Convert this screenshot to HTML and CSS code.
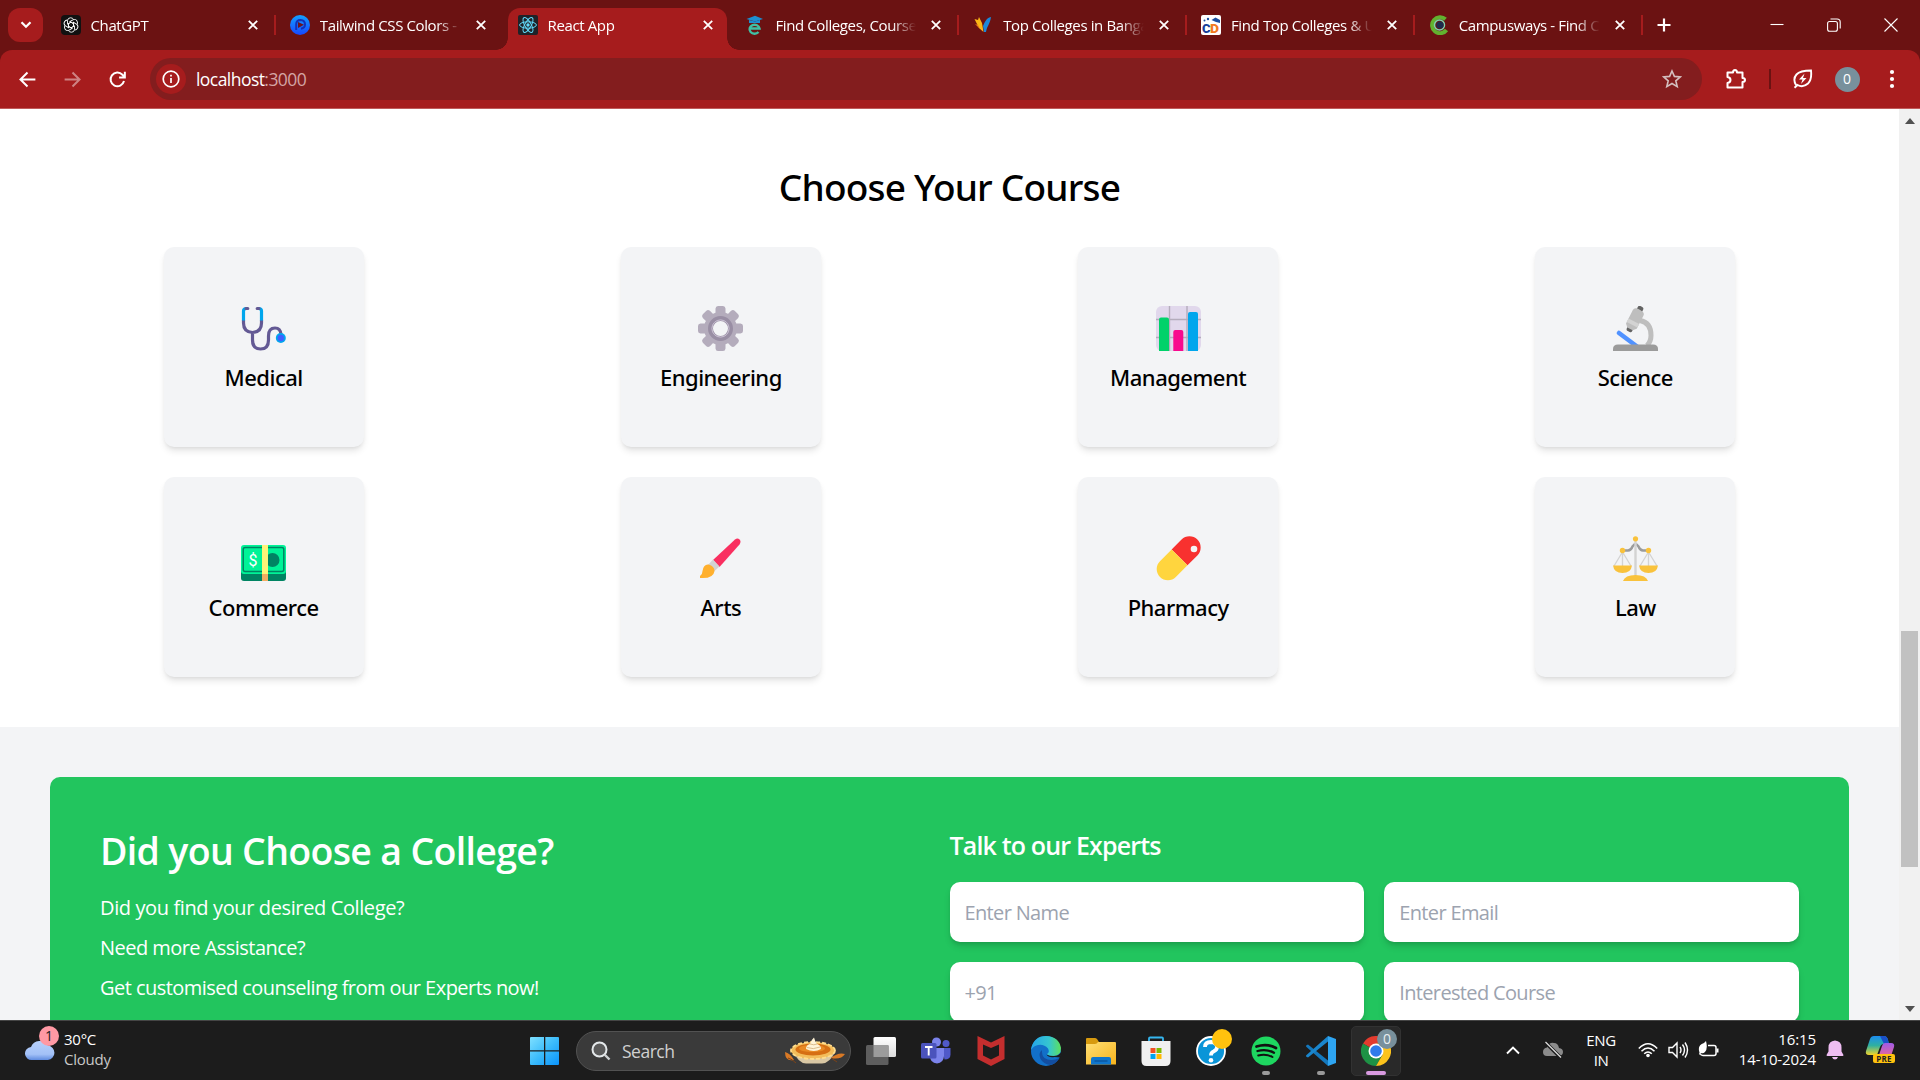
FILE: index.html
```html
<!DOCTYPE html>
<html lang="en">
<head>
<meta charset="utf-8">
<title>React App</title>
<link rel="stylesheet" href="styles.css">
</head>
<body>
<header class="tabstrip">
  <button class="tab-search" aria-label="Search tabs"><svg width="12" height="8" viewBox="0 0 12 8"><path d="M1.5 1.2 6 5.8l4.5-4.6" fill="none" stroke="#fff" stroke-width="2.2"/></svg></button>
  <div class="tab sep first"><svg class="fav" viewBox="0 0 20 20"><rect width="20" height="20" rx="4" fill="#111"/><g fill="none" stroke="#fff" stroke-width=".9"><path id="k" d="M10 7.200 6.500 9.200V5.300Q7 2.800 9.500 2.800q2 0 3 1.500"/><use href="#k" transform="rotate(60 10 10)"/><use href="#k" transform="rotate(120 10 10)"/><use href="#k" transform="rotate(180 10 10)"/><use href="#k" transform="rotate(240 10 10)"/><use href="#k" transform="rotate(300 10 10)"/><path d="m10 7.200 2.500 1.400v2.800L10 12.800l-2.500-1.400V8.600z"/></g></svg><span class="title">ChatGPT</span><svg class="close" viewBox="0 0 10 10"><path d="M.8.8l8.4 8.4M9.200.8.8 9.200"/></svg></div>
  <div class="tab"><svg class="fav" viewBox="0 0 20 20"><defs><linearGradient id="tw" x2="0" y2="1"><stop stop-color="#12a0ff"/><stop offset="1" stop-color="#1746ff"/></linearGradient></defs><circle cx="10" cy="10" r="10" fill="url(#tw)"/><path d="M6.200 15V9.500Q6.200 5 10.500 5q4.500.3 4.500 4.500 0 3.500-4 4.200" fill="none" stroke="#1330b8" stroke-width="2"/><path d="M8 7 14 9.800 8 13z" fill="#6b1420"/></svg><span class="title">Tailwind CSS Colors - Tailwind</span><svg class="close" viewBox="0 0 10 10"><path d="M.8.8l8.4 8.4M9.200.8.8 9.200"/></svg></div>
  <div class="tab active"><svg class="fav" viewBox="0 0 20 20"><rect width="20" height="20" rx="2" fill="#202228"/><g fill="none" stroke="#61dafb" stroke-width="1"><ellipse cx="10" cy="10" rx="8.400" ry="3.200"/><ellipse cx="10" cy="10" rx="8.400" ry="3.200" transform="rotate(60 10 10)"/><ellipse cx="10" cy="10" rx="8.400" ry="3.200" transform="rotate(120 10 10)"/></g><circle cx="10" cy="10" r="1.700" fill="#61dafb"/></svg><span class="title">React App</span><svg class="close" viewBox="0 0 10 10"><path d="M.8.8l8.4 8.4M9.200.8.8 9.200"/></svg></div>
  <div class="tab sep"><svg class="fav" viewBox="0 0 20 20"><path d="M1.500 4 10 .8 18 4l-8 2.500z" fill="#1d8fd1"/><path d="M4 5v3h11V5l-5 1.500z" fill="#1d8fd1"/><path d="M5 13.500h9.500A5 4.500 0 1 0 13.500 17" fill="none" stroke="#3fc0a5" stroke-width="2.400"/></svg><span class="title">Find Colleges, Courses, Exams</span><svg class="close" viewBox="0 0 10 10"><path d="M.8.8l8.4 8.4M9.200.8.8 9.200"/></svg></div>
  <div class="tab sep"><svg class="fav" viewBox="0 0 20 20"><path d="M1.500 4 5 5 6 2l3 6 1.500 9L6 13z" fill="#fbb615"/><path d="M2 9l3 1 2 4z" fill="#ef7d1a"/><path d="M18 2c-5 1-6 5-8 9l1 6h2c1-6 4-8 5-15z" fill="#1b87d8"/></svg><span class="title">Top Colleges in Bangalore</span><svg class="close" viewBox="0 0 10 10"><path d="M.8.8l8.4 8.4M9.200.8.8 9.200"/></svg></div>
  <div class="tab sep"><svg class="fav" viewBox="0 0 20 20"><rect width="20" height="20" rx="2" fill="#fff"/><path d="m10.500 5 4-2.500L19 5v3l-4-1z" fill="#1c4fa0"/><circle cx="3.500" cy="5.500" r="1" fill="#1c4fa0"/><circle cx="7" cy="4" r="1.200" fill="#1c4fa0"/><g font-family="Roboto,sans-serif" font-weight="900" font-size="13.500"><text x="1" y="17.500" textLength="8.500" lengthAdjust="spacingAndGlyphs" fill="#17409a">C</text><text x="9" y="17.500" textLength="9" lengthAdjust="spacingAndGlyphs" fill="#f27a1f">D</text></g></svg><span class="title">Find Top Colleges &amp; Universities</span><svg class="close" viewBox="0 0 10 10"><path d="M.8.8l8.4 8.4M9.200.8.8 9.200"/></svg></div>
  <div class="tab sep"><svg class="fav" viewBox="0 0 20 20"><path d="M16.500 4.300A8 8 0 1 0 17.500 15" fill="none" stroke="#62b22f" stroke-width="4"/><circle cx="10.500" cy="10" r="5" fill="none" stroke="#7fd3b0" stroke-width="1.500"/><circle cx="11" cy="10" r="3.600" fill="#1d2c4d"/></svg><span class="title">Campusways - Find Colleges</span><svg class="close" viewBox="0 0 10 10"><path d="M.8.8l8.4 8.4M9.200.8.8 9.200"/></svg></div>
  <svg class="newtab" width="14" height="14" viewBox="0 0 14 14"><path d="M7 .5v13M.5 7h13" stroke="#fff" stroke-width="2.200"/></svg>
  <div class="winctl">
    <svg width="14" height="14" viewBox="0 0 14 14"><path d="M.5 6.500h13"/></svg>
    <svg width="14" height="14" viewBox="0 0 14 14"><rect x=".6" y="3.500" width="9.800" height="9.800" rx="2"/><path d="M3.500 1h6.500q3.200 0 3.200 3v6.500"/></svg>
    <svg width="14" height="14" viewBox="0 0 14 14"><path d="m.5.5 13 13M13.500.5.5 13.500"/></svg>
  </div>
</header>
<div class="toolbar-back">
<nav class="toolbar">
  <svg class="nav" viewBox="0 0 20 20"><path d="M17.500 10H3.500M10 3.300 3.300 10l6.700 6.700" /></svg>
  <svg class="nav dim" viewBox="0 0 20 20"><path d="M2.500 10h14M10 3.300l6.700 6.700-6.700 6.700"/></svg>
  <svg class="nav" viewBox="0 0 20 20"><path d="M16.200 11.500A6.500 6.500 0 1 1 14.700 5.500L16.500 7.500M17 2.500V8h-5.500"/></svg>
  <div class="omnibox">
    <span class="info"><svg width="18" height="18" viewBox="0 0 18 18"><circle cx="9" cy="9" r="7.800" fill="none" stroke="#fff" stroke-width="1.700"/><path d="M9 8v5M9 4.800v1.700" stroke="#fff" stroke-width="1.700"/></svg></span>
    <span class="url">localhost<i>:3000</i></span>
    <svg class="star" width="20" height="20" viewBox="0 0 20 20"><path d="m10 2 2.400 5.400 5.900.5-4.500 3.900 1.400 5.800L10 14.500l-5.200 3.100 1.400-5.800L1.700 7.900l5.900-.5z" fill="none" stroke="#d4bfbf" stroke-width="1.600"/></svg>
  </div>
  <div class="tools">
    <svg width="22" height="22" viewBox="0 0 22 22"><path d="M2.500 4.500H8Q8 2 10 2t2 2.500h5.500V10q2.500 0 2.500 2t-2.500 2v5.500h-15V15q3-.5 3-3t-3-3z" fill="none" stroke="#fff" stroke-width="2" stroke-linejoin="round"/></svg>
    <span class="bar"></span>
    <svg width="22" height="22" viewBox="0 0 22 22"><path d="M4 17Q.5 11 4.500 6.500 8 2.500 19 2.500q1 9-3 13Q11 20 5.500 17L2.500 19.800" fill="none" stroke="#fff" stroke-width="1.900"/><path d="m12.500 5.500-5.500 6h3.500L9 16l5.500-6H11z" fill="#fff"/></svg>
    <span class="avatar">0</span>
    <svg class="dots" width="6" height="20" viewBox="0 0 6 20"><circle cx="3" cy="3" r="2.100"/><circle cx="3" cy="10" r="2.100"/><circle cx="3" cy="17" r="2.100"/></svg>
  </div>
</nav>
</div>
<div class="viewport">
<main class="page">
  <section class="courses">
    <h1>Choose Your Course</h1>
    <div class="grid">
      <div class="card"><svg viewBox="0 0 45 45"><g fill="none" stroke-width="3.200"><path d="M2.500 14v3q0 9 9 9.500 9-.5 9-9.500v-3M11.500 26v8q0 9 8 9t8-9V30q0-8 6.500-8 5.500 0 6 6.500" stroke="#635994"/><path d="M2.500 14.500V5q0-2.500 3-2.500M20.500 14.500V5q0-2.500-3-2.500" stroke="#00a6ed"/><path d="M5 2.500h1.800M16.200 2.500H18" stroke="#635994" stroke-linecap="round"/></g><circle cx="39.800" cy="32" r="5" fill="#00a6ed"/><circle cx="39.800" cy="32" r="3.200" fill="#3f5fff"/></svg><h2>Medical</h2></div>
      <div class="card"><svg viewBox="0 0 45 45"><g fill="#b4acbc"><circle cx="22.500" cy="22.500" r="16.500"/><g id="t"><path d="M17.500 8V2.500Q17.700 0 20 0h5q2.300 0 2.500 2.500V8zM17.500 37v5.500q.2 2.500 2.500 2.500h5q2.300 0 2.500-2.500V37z"/></g><use href="#t" transform="rotate(45 22.500 22.500)"/><use href="#t" transform="rotate(90 22.500 22.500)"/><use href="#t" transform="rotate(135 22.500 22.500)"/></g><circle cx="22.500" cy="22.500" r="10" fill="#f3f4f6" stroke="#998ea4" stroke-width="5"/><circle cx="22.500" cy="22.500" r="8.600" fill="none" stroke="#cdc4d6"/></svg><h2>Engineering</h2></div>
      <div class="card"><svg viewBox="0 0 45 45"><rect width="45" height="45" rx="6" fill="#e1d8ec"/><path d="M13.500 0v45M31 0v45M0 13.500h45M0 31.500h45" stroke="#b4acbc" stroke-width="1.400"/><path d="M3 45V13.500q0-2 2-2h6q2 0 2 2V45z" fill="#00d26a"/><path d="M17.300 45V26q0-2 2-2h6q2 0 2 2v19z" fill="#f8098e"/><path d="M32 45V8q0-2 2-2h6q2 0 2 2v37z" fill="#00a6ed"/></svg><h2>Management</h2></div>
      <div class="card"><svg viewBox="0 0 45 45"><path d="M27 14.500q11 2 11 15 0 6-4 10" fill="none" stroke="#bebebe" stroke-width="5"/><path d="m6 27 20 15" stroke="#5092ff" stroke-width="4.500" stroke-linecap="round"/><g transform="rotate(27 22 13)"><rect x="19" y="-1" width="6" height="28" rx="2" fill="#636363"/><path d="M16 6q0-3.500 6-3.500t6 3.500v15l-3 3h-6l-3-3z" fill="#bebebe"/><path d="M16 15.500h12v4H16z" fill="#d3d3d3"/></g><path d="M0 45v-2q0-4.500 5-4.500h35q5 0 5 4.500v2z" fill="#9b9b9b"/></svg><h2>Science</h2></div>
      <div class="card"><svg viewBox="0 0 45 45"><rect y="14" width="45" height="31" rx="3" fill="#008463"/><rect y="9" width="45" height="29" rx="3" fill="#00f397"/><rect x="2.200" y="11.500" width="40.600" height="24" rx="2" fill="none" stroke="#008463" stroke-width="1.500"/><circle cx="31.500" cy="24" r="7" fill="#008463"/><path d="M21 9h6v29h-6z" fill="#fff478"/><path d="M21 38h6v7h-6z" fill="#f3ad61"/><text x="12" y="30" text-anchor="middle" font-family="Roboto,sans-serif" font-size="16" fill="#fff">$</text></svg><h2>Commerce</h2></div>
      <div class="card"><svg viewBox="0 0 45 45"><path d="m15 24 22-20.500q2.500-2 4.500 0t0 5L21.500 31z" fill="#f92f60"/><path d="m10 29 5-5.500 6.500 7-5.500 5z" fill="#d3d3d3"/><path d="M2 40q2.500-1.500 2.500-5 1-7 6-6.500 6 1.500 6 6.500-1 8-14.500 7z" fill="#ffb02e"/></svg><h2>Arts</h2></div>
      <div class="card"><svg viewBox="0 0 45 45"><g transform="rotate(45 22.500 22.500)"><path d="M11.300 22.500V8.500a11.200 11.200 0 0 1 22.400 0v14z" transform="translate(0 -1.500)" fill="#f8312f"/><path d="M11.300 21v16.500a11.200 11.200 0 0 0 22.400 0V21z" fill="#ffd53e"/></g><circle cx="38" cy="13" r="3.300" fill="#f4f4f4"/></svg><h2>Pharmacy</h2></div>
      <div class="card"><svg viewBox="0 0 45 45"><path d="M10 14.500h5q3 0 4.500-4l2-2h2l2 2q1.500 4 4.500 4h5" fill="none" stroke="#9b9b9b" stroke-width="2.400"/><path d="M22.500 5v35" stroke="#d3d3d3" stroke-width="2.400"/><path d="M9.500 16 1 30M9.500 16 18 30M9.500 16v14M35.500 16 27 30M35.500 16 44 30M35.500 16v14" stroke="#d3d3d3" stroke-width="1.300"/><g fill="#f9c23c"><circle cx="22.500" cy="2.800" r="2.600"/><circle cx="9.500" cy="14.500" r="2.700"/><circle cx="35.500" cy="14.500" r="2.700"/><path d="M0 29.500h19q-1 7.500-9.500 7.500T0 29.500zM26 29.500h19q-1 7.500-9.500 7.500T26 29.500zM10 45q2-6 12.500-6T35 45z"/></g></svg><h2>Law</h2></div>
    </div>
  </section>
  <section class="contact">
    <div class="panel">
      <div class="pitch">
        <h3>Did you Choose a College?</h3>
        <p class="lead">Did you find your desired College?</p>
        <p>Need more Assistance?</p>
        <p>Get customised counseling from our Experts now!</p>
      </div>
      <form class="form">
        <h4>Talk to our Experts</h4>
        <div class="fields">
          <input placeholder="Enter Name"><input placeholder="Enter Email"><input placeholder="+91"><input placeholder="Interested Course">
        </div>
      </form>
    </div>
  </section>
</main>
<aside class="scroll">
  <svg width="10" height="6" viewBox="0 0 10 6"><path d="M0 6 5 0l5 6z" fill="#505050"/></svg>
  <div class="track"><div class="thumb"></div></div>
  <svg width="10" height="6" viewBox="0 0 10 6"><path d="M0 0h10L5 6z" fill="#505050"/></svg>
</aside>
</div>
<footer class="taskbar">
  <div class="weather">
    <span class="wicon"><svg width="30" height="24" viewBox="0 0 30 24"><defs><linearGradient id="cl" x2="0" y2="1"><stop stop-color="#b7d0fb"/><stop offset=".7" stop-color="#a3c1f7"/><stop offset="1" stop-color="#5f8be0"/></linearGradient></defs><path d="M7 23a6.500 6.500 0 0 1-1-13A9.500 9.500 0 0 1 23 8.500 7.300 7.300 0 0 1 23 23z" fill="url(#cl)"/></svg><b>1</b></span>
    <span class="wtext">30°C<br><em>Cloudy</em></span>
  </div>
  <div class="apps">
    <span class="app start"><svg width="30" height="30" viewBox="0 0 30 30"><defs><linearGradient id="w" x2="1" y2="1"><stop stop-color="#7fe0ff"/><stop offset=".5" stop-color="#3cbcfb"/><stop offset="1" stop-color="#0a93fb"/></linearGradient></defs><path d="M0 2q0-1 1-1h13v13.300H0zM15.300 1H28q1 0 1 1v12.300H15.300zM0 15.600h14V29H1q-1 0-1-1zM15.300 15.600H29V28q0 1-1 1H15.300z" fill="url(#w)"/></svg></span>
    <div class="search"><svg width="20" height="20" viewBox="0 0 20 20"><circle cx="8.500" cy="8.500" r="7" fill="#5a5a5a" stroke="#e4e8ea" stroke-width="2"/><path d="m13.500 13.500 5 5" stroke="#cfd2d4" stroke-width="2.400"/></svg><span>Search</span>
      <svg class="pie" width="60" height="28" viewBox="0 0 60 28"><path d="M9 15q4 11 12 11.500h16Q45 26 50 15z" fill="#d9c7a4"/><ellipse cx="28" cy="13.500" rx="22" ry="8.500" fill="#f3bd5b"/><ellipse cx="28" cy="13.500" rx="22" ry="8.500" fill="none" stroke="#ffdc8c" stroke-width="1.800" stroke-dasharray="4 2"/><ellipse cx="28" cy="12.500" rx="17.500" ry="6" fill="#d66f13"/><ellipse cx="27" cy="11.500" rx="13" ry="3.500" fill="#e98a24"/><path d="M21 12q0-4 4-5 1-4 4-6.500 1 4 3 6.500 4 1 4 5-7 4-15 0z" fill="#fff3d6"/><path d="M22 10.500q6 2.500 13-.5M25 7q4 1.500 7 0" stroke="#dbbd8d" fill="none"/><path d="M0 15q5 1 9 8-9 2-9-8zM46 21q7-6 14-4-4 6-14 4z" fill="#d97925"/><path d="M3 21q4 1 8 5M46 21l6 4" stroke="#7d4217" fill="none"/></svg></div>
    <span class="app"><svg width="30" height="30" viewBox="0 0 30 30"><defs><linearGradient id="tv" x2="0" y2="1"><stop stop-color="#fff"/><stop offset="1" stop-color="#dcdcdc"/></linearGradient></defs><rect x="7.500" y="1" width="22.500" height="20" rx="1.500" fill="url(#tv)"/><rect y="9" width="22.500" height="20" rx="1.500" fill="#5e5e5e"/><path d="M7.500 9h15v12h-15z" fill="#9c9c9c"/></svg></span>
    <span class="app"><svg width="30" height="30" viewBox="0 0 30 30"><circle cx="25" cy="7.500" r="3.500" fill="#5059c9"/><path d="M21 12h8.500v6.500q0 5-6 5z" fill="#5059c9"/><circle cx="15.500" cy="6" r="4.500" fill="#7b83eb"/><path d="M9 12h14v8q-.5 7-7 7.500-7-.5-7-7.500z" fill="#7b83eb"/><rect y="7" width="15.500" height="15.500" rx="1.500" fill="#4b53bc"/><path d="M4 11h7.500M7.700 11v8.500" stroke="#fff" stroke-width="1.900"/></svg></span>
    <span class="app"><svg width="30" height="30" viewBox="0 0 30 30"><path d="m1.500 0 13.500 6.500L28.500 0v23L15 30 1.500 23zM7 8.500v11l8 4 8-4v-11L15 12z" fill="#c42e2e" fill-rule="evenodd"/></svg></span>
    <span class="app"><svg width="30" height="30" viewBox="0 0 30 30"><defs><linearGradient id="e1"><stop stop-color="#25a5ea"/><stop offset=".6" stop-color="#35c6d0"/><stop offset="1" stop-color="#5de05c"/></linearGradient></defs><circle cx="15" cy="15" r="15" fill="#1270c9"/><path d="M.2 12.500Q3 0 15 0q13 .5 15 12 0 8-8 8-5 0-6-2 3-2 1-5.500Q13 8 7 9q-5 1-6.800 5z" fill="url(#e1)"/><path d="M11 14q-4 3-1.500 9 3 5 9.500 6 6-1 9.500-7-9 4-15 0-3-3-2.500-8z" fill="#134ea0"/><path d="M15.500 18.500q2 3.500 8 2.500l6 .5L31 13q-1 7-8 7-5 0-7.500-1.500z" fill="#1c1c1c"/></svg></span>
    <span class="app"><svg width="30" height="30" viewBox="0 0 30 30"><defs><linearGradient id="fd" x2="1" y2="1"><stop stop-color="#ffdf75"/><stop offset="1" stop-color="#f8b41c"/></linearGradient></defs><path d="M0 3q0-1 1-1h8q1 0 2 1l2 3v5H0z" fill="#d79a0f"/><path d="M0 8h9q2 0 3-2h17q1 0 1 1v21.500H0z" fill="url(#fd)"/><path d="M5 28.500V23q0-2 2-2h16q2 0 2 2v5.500z" fill="#1076cc"/><path d="M8.500 25h13" stroke="#0b549b" stroke-width="1.300"/></svg></span>
    <span class="app"><svg width="30" height="30" viewBox="0 0 30 30"><path d="M8 7V2.500Q8 1.500 9 1.500h12q1 0 1 1V7" fill="none" stroke="#35b6ef" stroke-width="1.800"/><path d="M.5 5h29v20q0 5-5 5h-19q-5 0-5-5z" fill="#f0f0f0"/><path d="M9.500 12h5v5h-5z" fill="#f25022"/><path d="M15.500 12h5v5h-5z" fill="#7fba00"/><path d="M9.500 18h5v5h-5z" fill="#00a4ef"/><path d="M15.500 18h5v5h-5z" fill="#ffb900"/></svg></span>
    <span class="app"><svg width="30" height="30" viewBox="0 0 30 30"><circle cx="15" cy="15" r="14" fill="#0a95d8" stroke="#fff" stroke-width="1.800"/><path d="M9 11q0-5 6-5 6 .3 6 5 0 3-3.500 4.500-2.500 1-2.500 4" fill="none" stroke="#fff" stroke-width="3.800"/><circle cx="15" cy="24.200" r="2.300" fill="#fff"/></svg><u class="dot"></u></span>
    <span class="app run"><svg width="30" height="30" viewBox="0 0 30 30"><circle cx="15" cy="15" r="14.500" fill="#1ed760"/><g fill="none" stroke="#111" stroke-linecap="round"><path d="M5.500 10.500Q16 7 25 12" stroke-width="2.700"/><path d="M6.500 15Q15.500 12.500 23 16.700" stroke-width="2.300"/><path d="M7.200 19.500Q15 17.500 21.500 21" stroke-width="1.900"/></g></svg></span>
    <span class="app run"><svg width="30" height="30" viewBox="0 0 30 30"><path d="M2 8.500 22 24.500V30L.5 11q-1-1 0-1.800z" fill="#1478bd"/><path d="M2 21.500 22 5.500V0L.5 19q-1 1 0 1.800z" fill="#1a86cd"/><path d="M22 0l8 3v24l-8 3z" fill="#2ea5f2"/></svg></span>
    <span class="app run current"><svg width="30" height="30" viewBox="0 0 30 30"><path d="M15 15 2 7.500A15 15 0 0 1 28 7.500H15z" fill="#e33b2e"/><path d="M15 15 2 7.500A15 15 0 0 0 15 30l6.500-11.200z" fill="#1e9245"/><path d="M15 7.500h13A15 15 0 0 1 15 30l6.500-11.200z" fill="#fcc31c"/><circle cx="15" cy="15" r="7.500" fill="#fff"/><circle cx="15" cy="15" r="5.800" fill="#2f7bea"/></svg><u class="dot grey">0</u></span>
  </div>
  <div class="tray">
    <svg class="chev" width="14" height="9" viewBox="0 0 14 9"><path d="m1 7.500 6-6 6 6" fill="none" stroke="#fff" stroke-width="1.900"/></svg>
    <svg class="od" width="22" height="18" viewBox="0 0 22 18"><path d="M5 15q-4 0-4-4t4-4.500Q7 1 12 2q4 0 5 5 4 .5 4 4t-4 4z" fill="#8b8b8b"/><path d="m3 1 16 16" stroke="#1c1c1c" stroke-width="3.500"/><path d="m3.500 1 15.500 15.500" stroke="#ddd" stroke-width="1.300"/></svg>
    <span class="lang">ENG<br>IN</span>
    <svg class="wifi" width="20" height="16" viewBox="0 0 20 16"><g fill="none" stroke="#fff" stroke-width="1.500"><path d="M.8 6.500Q10-3 19.200 6.500M3.500 9.200q6.500-6.500 13 0M6.200 11.800q3.800-3.800 7.600 0"/></g><circle cx="10" cy="13.500" r="1.800" fill="#fff"/></svg>
    <svg class="vol" width="21" height="18" viewBox="0 0 21 18"><g fill="none" stroke="#fff" stroke-width="1.400"><path d="M1 6.500h3.500L9 2v14l-4.500-4.500H1zM12 6q2 3 0 6M14.500 3.500q4 5.500 0 11M17 1.500q5 7.500 0 15"/></g></svg>
    <svg class="bat" width="21" height="18" viewBox="0 0 21 18"><path d="M10 4.500h6q2 0 2 2v6q0 2-2 2H5q-2 0-3-2" fill="none" stroke="#fff" stroke-width="1.500"/><path d="M18.500 7.500h2v4h-2z" fill="#fff"/><path d="M1.500 11.500Q-1 4 6 2l2-2q2 8-1 11-2 2-4 1l-2 2z" fill="#fff"/></svg>
    <span class="clock">16:15<br>14-10-2024</span>
    <svg class="bell" width="18" height="20" viewBox="0 0 18 20"><path d="M9 .5q6.500.5 6.500 7v4l2 3.500q0 1-1 1h-15q-1 0-1-1l2-3.500v-4Q2.500 1 9 .500zM6 17h6q-1 2.500-3 2.500T6 17z" fill="#efbdf3"/></svg>
    <span class="copilot"><svg width="30" height="30" viewBox="0 0 30 30"><defs><linearGradient id="c1" x2="0" y2="1"><stop stop-color="#1c8df0"/><stop offset=".5" stop-color="#2fb0a0"/><stop offset="1" stop-color="#f2d32b"/></linearGradient><linearGradient id="c2" x2="0" y2="1"><stop stop-color="#a05be8"/><stop offset="1" stop-color="#f46a8a"/></linearGradient></defs><path d="M9 1h10q3 0 4 4l1 4h-5q-3 0-4 3l-3 8H4Q0 20 1 16L5 4q1-3 4-3z" fill="url(#c1)"/><path d="M15 1h4q3 0 4 4l1 4h-5z" fill="#1a50c8"/><path d="M20 8h6q4 0 3 4l-3 9q-1 3-4 3H10q3-1 4-4l3-9q1-3 3-3z" fill="url(#c2)"/></svg><b>PRE</b></span>
  </div>
</footer>
</body>
</html>
```
FILE: styles.css
```css
* { box-sizing: border-box; margin: 0; }
body {
  width: 1920px; height: 1080px; overflow: hidden;
  display: grid; grid-template-rows: 50px 59px 911px 60px;
  font-family: "Open Sans", "Noto Sans", sans-serif; background: #fff; color: #000;
}
svg { flex: none; display: block; }
button { border: 0; padding: 0; }

/* browser tabs */
.tabstrip { background: #6b1212; display: flex; align-items: center; padding-left: 8px; color: #fff; }
.tab-search { width: 35px; height: 34px; border-radius: 12px; background: #a61c1d; display: grid; place-items: center; margin-right: 5px; }
.tab { width: 227.8px; height: 42px; margin-top: 8px; padding: 0 18px 8px 14px; display: flex; align-items: center; position: relative; }
.tab.first { padding-left: 12.5px; }
.fav { width: 20px; height: 20px; margin-right: 10px; }
.title { flex: 1; min-width: 0; margin-right: 15px; overflow: hidden; white-space: nowrap; font-size: 15px; line-height: 22px; letter-spacing: -.38px; -webkit-mask-image: linear-gradient(90deg, #000 calc(100% - 24px), transparent); mask-image: linear-gradient(90deg, #000 calc(100% - 24px), transparent); }
.close { width: 10px; height: 10px; fill: none; stroke: #fff; stroke-width: 1.8; }
.tab.sep { background: linear-gradient(#a61c1d, #a61c1d) right 7px / 2px 20px no-repeat; }
.tab.active::before { content: ""; position: absolute; z-index: 0; inset: 0 4px; background: #a61c1d; border-radius: 12px 12px 0 0; }
.tab.active::after { content: ""; position: absolute; left: -8px; right: -8px; bottom: 0; height: 12px; background: radial-gradient(circle at 0 0, transparent 11.5px, #a61c1d 12px) left / 12px 12px no-repeat, radial-gradient(circle at 100% 0, transparent 11.5px, #a61c1d 12px) right / 12px 12px no-repeat; }
.tab.active > * { position: relative; z-index: 1; }
.newtab { margin-left: 14px; }
.winctl { margin-left: auto; display: flex; gap: 43px; padding-right: 22px; }
.winctl svg { fill: none; stroke: #fff; stroke-width: 1.1; }

/* address bar */
.toolbar-back { background: #6b1212; }
.toolbar { height: 59px; background: #a61c1d; border-bottom: 1px solid #c05a5a; border-radius: 12px 12px 0 0; display: flex; align-items: center; padding-left: 17px; }
.nav { width: 21px; height: 21px; margin-right: 24px; fill: none; stroke: #fff; stroke-width: 1.9; }
.nav.dim { opacity: .45; }
.omnibox { width: 1552px; height: 42px; border-radius: 21px; background: #831d1e; margin-left: -2px; padding: 0 20px 0 6px; display: flex; align-items: center; }
.info { width: 30px; height: 30px; border-radius: 50%; background: #a61c1d; display: grid; place-items: center; }
.url { margin-left: 10px; font-size: 17.5px; letter-spacing: -.55px; color: #fff; }
.url i { font-style: normal; color: #d4a5a5; }
.star { margin-left: auto; }
.tools { flex: 1; display: flex; align-items: center; padding-left: 23px; }
.bar { width: 1.5px; height: 20px; background: #6b1212; margin: 0 21px 0 22px; }
.avatar { width: 25px; height: 25px; border-radius: 50%; background: #78909c; color: #fff; font-size: 14px; line-height: 24px; text-align: center; margin: 0 21px; }
.dots { fill: #fff; margin-left: 8px; }

/* page */
.viewport { display: grid; grid-template-columns: 1899px 21px; overflow: hidden; }
.page { height: 911px; overflow: hidden; background: #f3f4f6; }
.courses { background: #fff; padding: 55px 50px 50px; }
h1, .card h2 { font-family: "Noto Sans", "Open Sans", sans-serif; font-weight: 500; }
h1 { font-size: 37px; line-height: 45px; text-align: center; margin-bottom: 38px; letter-spacing: -.8px; }
.grid { display: grid; grid-template-columns: repeat(4, 1fr); gap: 30px; justify-items: center; }
.card { width: 200px; height: 200px; border-radius: 10px; background: #f3f4f6; box-shadow: 0 5px 7px -1px rgba(0,0,0,.1), 0 2px 4px -2px rgba(0,0,0,.1); display: flex; flex-direction: column; align-items: center; padding-top: 58.5px; }
.card svg { width: 45px; height: 45px; }
.card h2 { font-size: 22px; line-height: 35px; margin-top: 9.5px; letter-spacing: -.5px; }
.contact { padding: 50px; }
.panel { height: 420px; background: #22c55e; border-radius: 10px; padding: 51px 50px 50px; display: grid; grid-template-columns: 1fr 1fr; color: #fff; }
h3 { font-size: 37.5px; line-height: 45px; font-weight: 600; margin-bottom: 20px; letter-spacing: -.68px; }
.pitch p { font-size: 20px; line-height: 30px; margin-bottom: 10px; letter-spacing: -.54px; }
.pitch .lead { letter-spacing: -.38px; }
h4 { font-size: 25px; line-height: 35px; font-weight: 600; margin-bottom: 19px; letter-spacing: -.84px; }
.fields { display: grid; grid-template-columns: 1fr 1fr; gap: 20px; }
.fields input { height: 60px; min-width: 0; border: 0; border-radius: 10px; padding: 0 15px; font: 20px "Open Sans", sans-serif; letter-spacing: -.65px; background: #fff; box-shadow: 0 5px 7px -1px rgba(0,0,0,.15), 0 2px 4px -2px rgba(0,0,0,.15); }
.fields input::placeholder { color: #9ca3af; opacity: 1; }
.scroll { background: #f1f1f1; display: flex; flex-direction: column; align-items: center; padding: 9px 0 8px; }
.track { flex: 1; width: 17px; padding-top: 507px; }
.thumb { height: 236px; background: #c1c1c1; }

/* taskbar */
.taskbar { background: #1c1c1c; border-top: 1px solid #454545; color: #fff; display: grid; grid-template-columns: 517px 1fr 420px; font-size: 15px; line-height: 20px; }
.weather { display: flex; padding: 0 0 3px 25px; align-items: center; }
.wicon { position: relative; }
.wicon b { position: absolute; left: 14px; top: -11px; width: 20px; height: 20px; border-radius: 50%; background: #ff99a4; color: #222; font-weight: 400; text-align: center; font-size: 14px; }
.wtext { margin-left: 9px; letter-spacing: -.25px; }
.wtext em { font-style: normal; color: #c8c8c8; }
.apps { display: flex; align-items: center; }
.app { width: 55px; height: 50px; display: grid; place-items: center; position: relative; }
.search { width: 275px; height: 40px; border-radius: 20px; background: #3a3a3a; border: 1px solid #525252; margin: 0 2px 0 4px; padding: 0 5px 0 14px; display: flex; align-items: center; font-size: 17.5px; color: #d0d0d0; }
.search span { margin-left: 11px; letter-spacing: -.5px; }
.pie { margin-left: auto; }
.dot { position: absolute; right: 6px; top: 3px; width: 20px; height: 20px; border-radius: 50%; background: #ffc20e; text-decoration: none; text-align: center; }
.dot.grey { background: #78909c; right: 6px; font-size: 14px; color: #e8eef0; }
.run::after { content: ""; position: absolute; bottom: 1px; left: 23.5px; width: 8px; height: 4px; border-radius: 2px; background: #9a9a9a; }
.current::before { content: ""; position: absolute; inset: 0 2.5px; border-radius: 5px; background: #292929; border: 1px solid #323232; }
.current > svg { position: relative; }
.current::after { width: 20px; left: 17.5px; background: #d99ae0; }
.tray { display: flex; align-items: center; padding-left: 6px; padding-bottom: 1px; }
.od { margin-left: 22px; }
.lang { width: 40px; margin-left: 17px; text-align: center; letter-spacing: -.4px; }
.wifi { margin-left: 17px; }
.vol { margin-left: 10px; }
.bat { margin-left: 9px; }
.clock { width: 82px; margin-left: 15px; padding-bottom: 2px; text-align: right; letter-spacing: -.1px; white-space: nowrap; }
.bell { margin-left: 10px; }
.copilot { margin-left: 21px; position: relative; }
.copilot b { position: absolute; left: 8px; top: 19px; width: 22px; height: 9px; border-radius: 2px; background: #ffc20e; color: #222; font-size: 8px; line-height: 9px; text-align: center; letter-spacing: .2px; }
```
